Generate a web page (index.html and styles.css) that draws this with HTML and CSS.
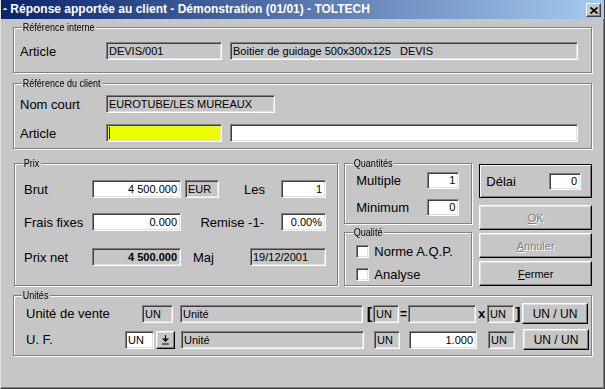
FILE: index.html
```html
<!DOCTYPE html>
<html lang="fr">
<head>
  <meta charset="UTF-8">
  <title>Réponse apportée au client - TOLTECH</title>
  <link rel="stylesheet" href="styles.css">
</head>
<body>
  <div class="window">
    <div class="titlebar">
      <span class="title">- Réponse apportée au client - Démonstration (01/01) - TOLTECH</span>
      <span class="close-btn">
        <svg width="8" height="7" viewBox="0 0 8 7"><path d="M0.5 0.5 L7.5 6.5 M7.5 0.5 L0.5 6.5" stroke="#000" stroke-width="1.7"/></svg>
      </span>
    </div>

    <div class="content">
      <!-- Référence interne -->
      <div class="group ref-int">
        <span class="group-title">Référence interne</span>
        <div class="row">
          <span class="label lbl-ref">Article</span>
          <span class="field ro w-code">DEVIS/001</span>
          <span class="field ro w-desc">Boitier de guidage 500x300x125&nbsp;&nbsp; DEVIS</span>
        </div>
      </div>

      <!-- Référence du client -->
      <div class="group ref-client">
        <span class="group-title">Référence du client</span>
        <div class="row">
          <span class="label lbl-ref">Nom court</span>
          <span class="field ro w-nom">EUROTUBE/LES MUREAUX</span>
        </div>
        <div class="row next-row">
          <span class="label lbl-ref">Article</span>
          <span class="field focus w-code"><span class="caret"></span></span>
          <span class="field w-desc"></span>
        </div>
      </div>

      <div class="middle">
        <!-- Prix -->
        <div class="group prix">
          <span class="group-title">Prix</span>
          <div class="row">
            <span class="label lbl-prix">Brut</span>
            <span class="field num w-price">4 500.000</span>
            <span class="field ro w-cur">EUR</span>
            <span class="label lbl-les">Les</span>
            <span class="field num w-qty">1</span>
          </div>
          <div class="row prix-row2">
            <span class="label lbl-prix">Frais fixes</span>
            <span class="field num w-price">0.000</span>
            <span class="label lbl-remise">Remise -1-</span>
            <span class="field num w-qty">0.00%</span>
          </div>
          <div class="row prix-row3">
            <span class="label lbl-prix">Prix net</span>
            <span class="field ro num bold w-price">4 500.000</span>
            <span class="label lbl-maj">Maj</span>
            <span class="field ro w-date">19/12/2001</span>
          </div>
        </div>

        <div class="col-qte">
          <!-- Quantités -->
          <div class="group quantites">
            <span class="group-title">Quantités</span>
            <div class="row">
              <span class="label lbl-qte">Multiple</span>
              <span class="field num small w-small">1</span>
            </div>
            <div class="row qte-row2">
              <span class="label lbl-qte">Minimum</span>
              <span class="field num small w-small">0</span>
            </div>
          </div>

          <!-- Qualité -->
          <div class="group qualite">
            <span class="group-title">Qualité</span>
            <label class="check">
              <span class="checkbox"></span>
              <span class="check-label">Norme A.Q.P.</span>
            </label>
            <label class="check check2">
              <span class="checkbox"></span>
              <span class="check-label">Analyse</span>
            </label>
          </div>
        </div>

        <div class="col-actions">
          <div class="delai">
            <span class="label">Délai</span>
            <span class="field num small w-small">0</span>
          </div>
          <button class="btn disabled btn-ok"><u>O</u>K</button>
          <button class="btn disabled"><u>A</u>nnuler</button>
          <button class="btn"><u>F</u>ermer</button>
        </div>
      </div>

      <!-- Unités -->
      <div class="group unites">
        <span class="group-title">Unités</span>
        <div class="row unit-row">
          <span class="label lbl-unit1">Unité de vente</span>
          <span class="field ro w-un1">UN</span>
          <span class="field ro w-unite">Unité</span>
          <span class="sym sym-open">[</span>
          <span class="field ro w-un2">UN</span>
          <span class="sym sym-eq">=</span>
          <span class="field ro w-ratio"></span>
          <span class="sym sym-x">x</span>
          <span class="field ro w-un3">UN</span>
          <span class="sym sym-close">]</span>
          <button class="btn btn-unit">UN / UN</button>
        </div>
        <div class="row unit-row unit-row2">
          <span class="label lbl-unit2">U. F.</span>
          <span class="field w-combo">UN</span>
          <span class="btn drop-btn">
            <svg width="9" height="10" viewBox="0 0 9 10"><path d="M4.5 0 V4" stroke="#000" stroke-width="1"/><path d="M1 3.5 H8 L4.5 7 Z" fill="#000"/><path d="M1 9 H8" stroke="#000" stroke-width="1"/></svg>
          </span>
          <span class="field ro w-unite">Unité</span>
          <span class="sym sym-open"></span>
          <span class="field ro w-un2">UN</span>
          <span class="sym sym-eq"></span>
          <span class="field num w-ratio">1.000</span>
          <span class="sym sym-x"></span>
          <span class="field ro w-un3">UN</span>
          <span class="sym sym-close"></span>
          <button class="btn btn-unit">UN / UN</button>
        </div>
      </div>
    </div>
  </div>
</body>
</html>
```

FILE: styles.css
```css
* {
  box-sizing: border-box;
  margin: 0;
  padding: 0;
}

body {
  width: 605px;
  height: 389px;
  overflow: hidden;
  font-family: "Liberation Sans", Arial, sans-serif;
  font-size: 13px;
  color: #000;
  background: #c6c6c6;
}

.window {
  width: 605px;
  height: 389px;
  background: #c6c6c6;
  border-left: 1px solid #dfdfdf;
  border-right: 1px solid #404040;
  border-bottom: 1px solid #404040;
  box-shadow: inset -1px -1px 0 #808080;
}

/* title bar */
.titlebar {
  height: 19px;
  display: flex;
  justify-content: space-between;
  padding: 0 3px 0 2px;
  background: linear-gradient(to right, #0a246a, #a6caf0);
  color: #fff;
}

.title {
  font-weight: bold;
  font-size: 12px;
  line-height: 19px;
  white-space: nowrap;
}

.close-btn {
  width: 15px;
  height: 14px;
  margin-top: 3px;
  display: flex;
  align-items: center;
  justify-content: center;
  background: #c6c6c6;
  border: 1px solid;
  border-color: #fff #404040 #404040 #fff;
  box-shadow: inset -1px -1px 0 #808080;
}

.content {
  padding: 8px 12px 0 12px;
}

/* group boxes */
.group {
  position: relative;
  border: 1px solid #808080;
  box-shadow: inset 1px 1px 0 #fff, 1px 1px 0 #fff;
}

/* the dialog font is a narrow one: squeeze the sans to its width */
.group-title {
  position: absolute;
  top: -7px;
  left: 8px;
  padding: 0 2px 0 1px;
  background: #c6c6c6;
  font-size: 11px;
  line-height: 13px;
  white-space: nowrap;
  transform: scaleX(0.82);
  transform-origin: left center;
}

.row {
  display: flex;
  align-items: center;
}

.label {
  white-space: nowrap;
}

/* fields */
.field {
  display: block;
  height: 18px;
  border: 1px solid;
  border-color: #808080 #fff #fff #808080;
  box-shadow: inset 1px 1px 0 #404040, inset -1px -1px 0 #dfdfdf;
  background: #fff;
  font-size: 11px;
  line-height: 16px;
  padding: 0 3px 0 2px;
  white-space: nowrap;
  overflow: hidden;
}

.field.ro { background: #c6c6c6; }
.field.num { text-align: right; }
.field.bold { font-weight: bold; }
.field.small { height: 17px; line-height: 15px; }
.field.focus { background: #eeff00; padding-top: 2px; }

.caret {
  display: block;
  width: 1px;
  height: 12px;
  background: #000;
}

/* références */
.ref-int {
  height: 46px;
  padding: 14px 0 0 6px;
}

.ref-client {
  height: 66px;
  margin-top: 10px;
  padding: 11px 0 0 6px;
}

.next-row { margin-top: 11px; }

.lbl-ref { width: 86px; }
.w-code { width: 116px; }
.w-desc { width: 348px; margin-left: 8px; }
.w-nom { width: 169px; }

/* middle part */
.middle {
  display: flex;
  align-items: flex-start;
  margin-top: 14px;
}

.prix {
  width: 325px;
  height: 123px;
  margin-left: 1px;
  padding: 16px 0 0 9px;
}

.prix-row2 { margin-top: 15px; }
.prix-row3 { margin-top: 17px; }

.lbl-prix { width: 68px; }
.w-price { width: 89px; }
.w-cur { width: 34px; margin-left: 4px; }
.w-qty { width: 45px; }
.w-date { width: 76px; }

.lbl-les {
  width: 62px;
  text-align: right;
  padding-right: 16px;
}

.lbl-remise {
  width: 100px;
  text-align: right;
  padding-right: 17px;
}

.lbl-maj {
  width: 69px;
  padding-left: 12px;
}

.col-qte {
  display: flex;
  flex-direction: column;
  margin-left: 6px;
}

.quantites {
  width: 128px;
  height: 61px;
  padding: 8px 0 0 11px;
}

.qte-row2 { margin-top: 10px; }
.lbl-qte { width: 71px; }
.w-small { width: 32px; }

.qualite {
  width: 128px;
  height: 54px;
  margin-top: 8px;
  padding: 12px 0 0 11px;
}

.check {
  display: flex;
  align-items: center;
  height: 13px;
  line-height: 13px;
}

.check2 { margin-top: 10px; }

.checkbox {
  width: 13px;
  height: 13px;
  border: 1px solid;
  border-color: #808080 #fff #fff #808080;
  box-shadow: inset 1px 1px 0 #404040, inset -1px -1px 0 #dfdfdf;
  background: #fff;
}

.check-label { margin-left: 5px; }

.col-actions {
  display: flex;
  flex-direction: column;
  width: 113px;
  margin-left: 7px;
}

.delai {
  display: flex;
  align-items: center;
  justify-content: space-between;
  height: 34px;
  margin-top: 1px;
  padding: 0 10px 0 6px;
  border: 1px solid #000;
  box-shadow: inset 1px 1px 0 #fff, inset -1px -1px 0 #808080;
}

/* buttons */
.btn {
  display: flex;
  align-items: center;
  justify-content: center;
  height: 25px;
  margin-top: 3px;
  font-family: "Liberation Sans", Arial, sans-serif;
  font-size: 11px;
  color: #000;
  background: #c6c6c6;
  border: 1px solid;
  border-color: #fff #000 #000 #fff;
  box-shadow: inset -1px -1px 0 #808080, inset 1px 1px 0 #dfdfdf;
}

.btn-ok { margin-top: 7px; }

.btn.disabled {
  color: #808080;
  text-shadow: 1px 1px 0 #fff;
}

/* unités */
.unites {
  height: 61px;
  margin-top: 9px;
  padding: 7px 0 0 12px;
}

.unit-row2 { margin-top: 5px; }

.lbl-unit1 { width: 116px; }
.lbl-unit2 { width: 99px; }
.w-un1 { width: 31px; }
.w-combo { width: 29px; }
.w-unite { width: 183px; margin-left: 7px; }
.w-un2 { width: 26px; }
.w-ratio { width: 68px; }
.w-un3 { width: 27px; }

.drop-btn {
  width: 19px;
  height: 18px;
  margin: 0 0 0 2px;
}

.unit-row2 .w-unite { margin-left: 6px; }

.sym {
  font-weight: bold;
  text-align: center;
  line-height: 16px;
}

.sym-open { width: 10px; font-size: 16px; text-align: right; padding-right: 1px; }
.sym-eq { width: 9px; font-size: 12px; }
.sym-x { width: 11px; font-size: 13px; }
.sym-close { width: 8px; font-size: 16px; }

.btn-unit {
  width: 66px;
  height: 21px;
  margin-top: 0;
  font-size: 12px;
}
```
